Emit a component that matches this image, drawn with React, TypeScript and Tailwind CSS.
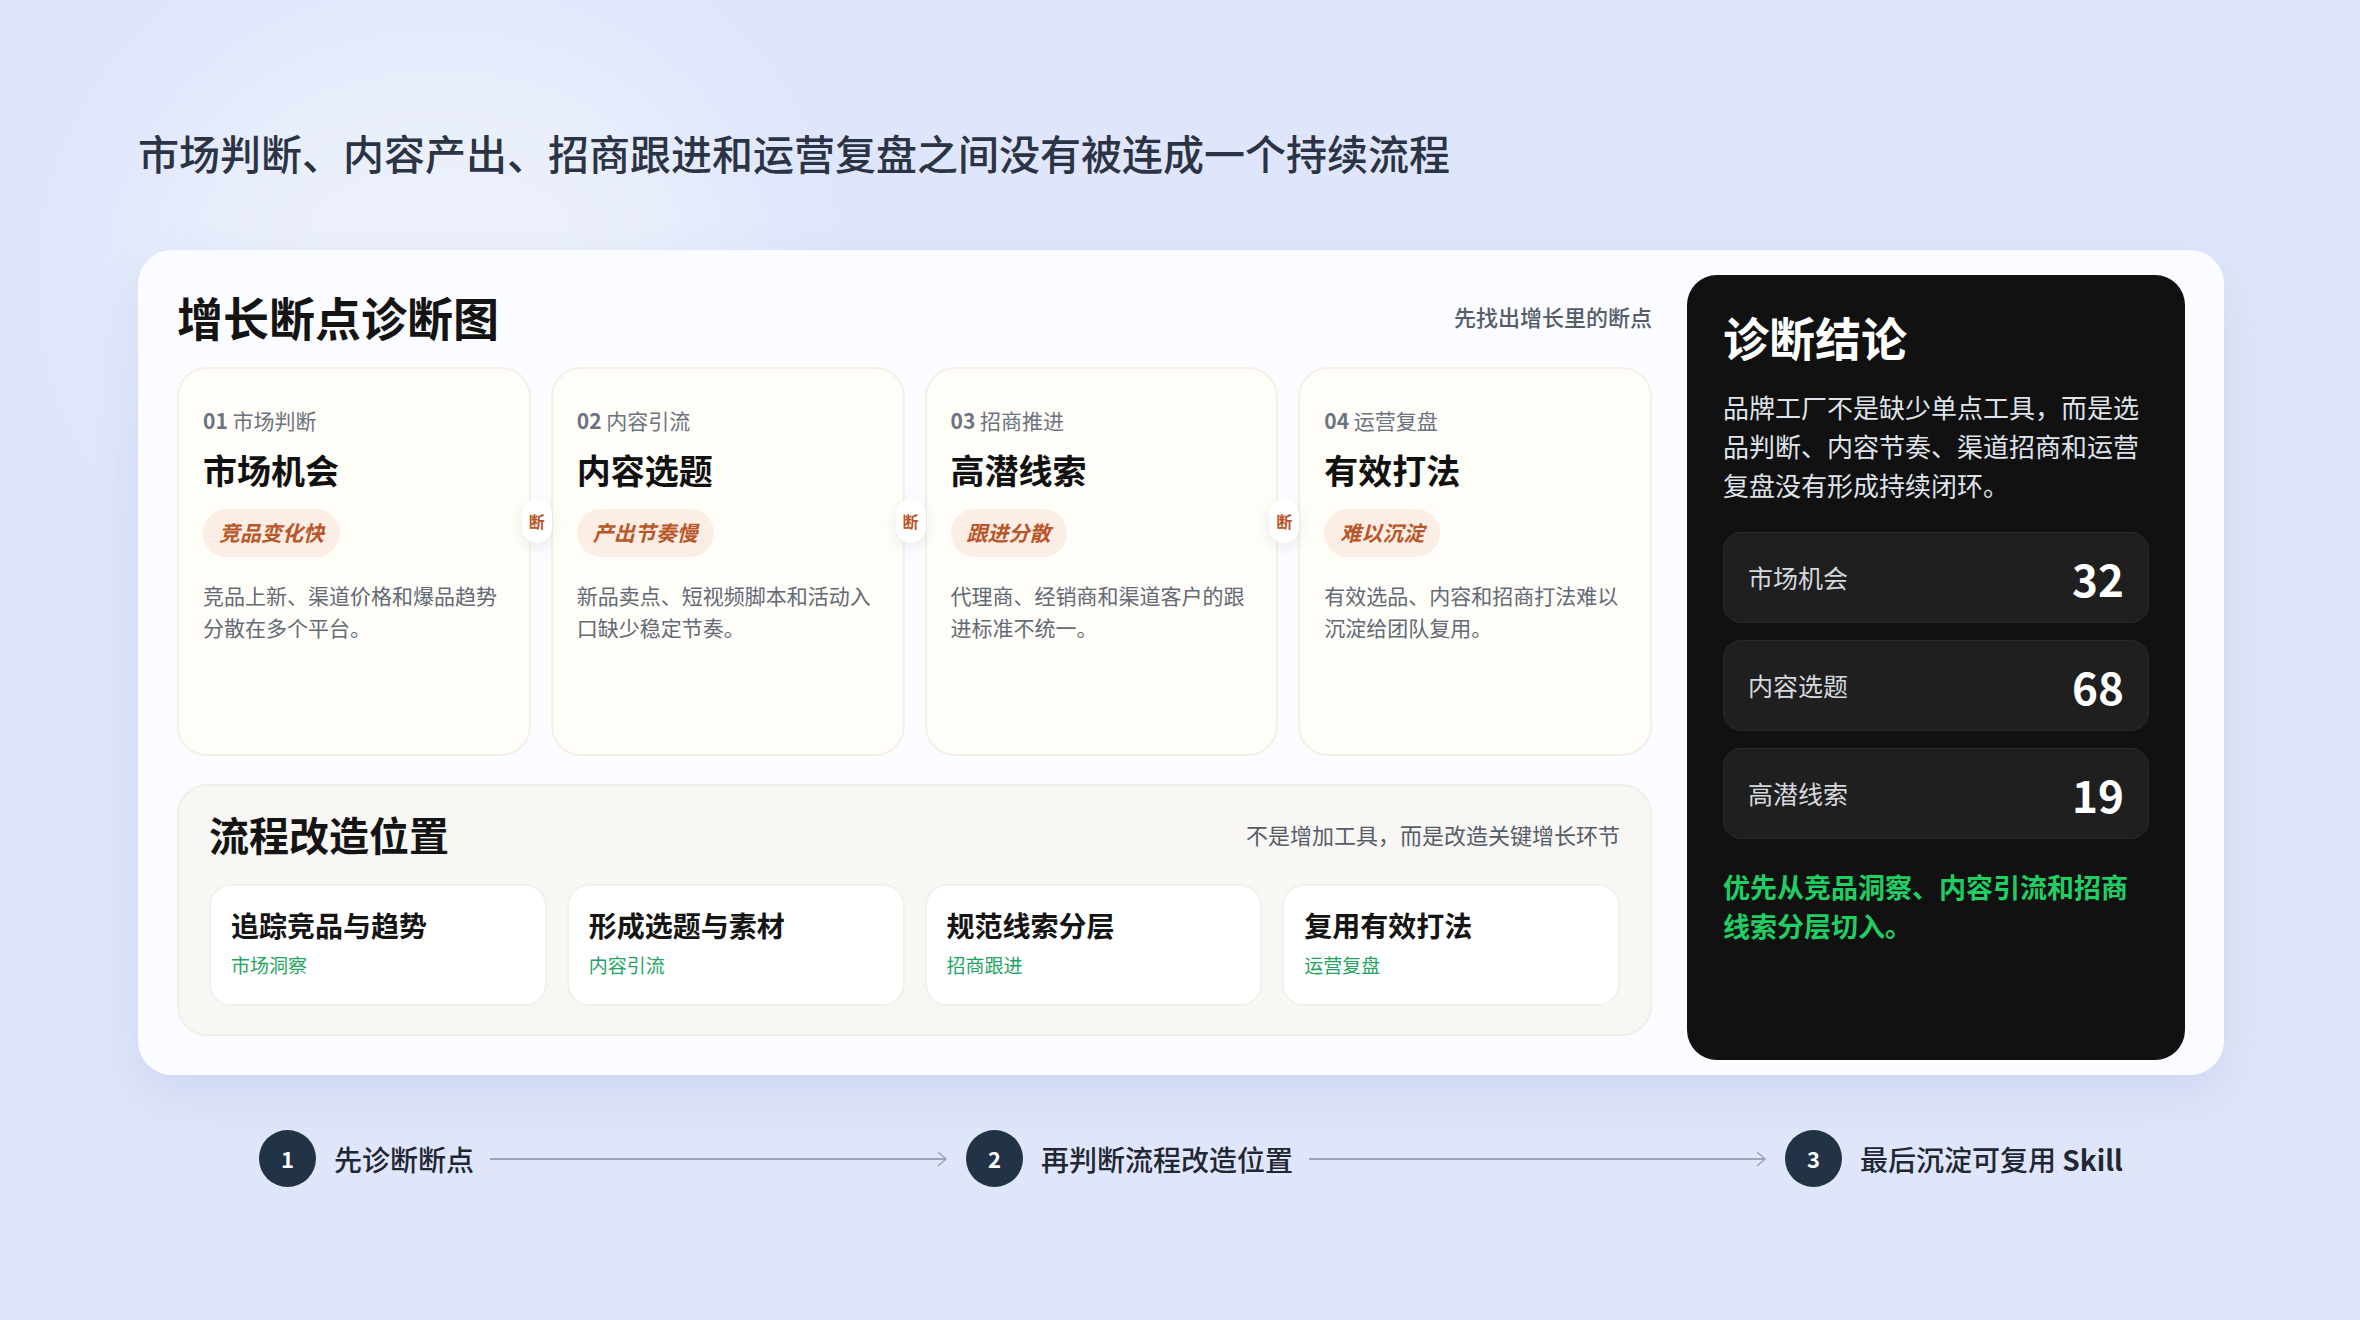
import React from 'react';

const font = { fontFamily: '"Noto Sans CJK SC", "Noto Sans", sans-serif' };

const stages = [
  { no: '01', cat: '市场判断', title: '市场机会', tag: '竞品变化快', desc: '竞品上新、渠道价格和爆品趋势分散在多个平台。' },
  { no: '02', cat: '内容引流', title: '内容选题', tag: '产出节奏慢', desc: '新品卖点、短视频脚本和活动入口缺少稳定节奏。' },
  { no: '03', cat: '招商推进', title: '高潜线索', tag: '跟进分散', desc: '代理商、经销商和渠道客户的跟进标准不统一。' },
  { no: '04', cat: '运营复盘', title: '有效打法', tag: '难以沉淀', desc: '有效选品、内容和招商打法难以沉淀给团队复用。' },
];

const fixes = [
  { title: '追踪竞品与趋势', tag: '市场洞察' },
  { title: '形成选题与素材', tag: '内容引流' },
  { title: '规范线索分层', tag: '招商跟进' },
  { title: '复用有效打法', tag: '运营复盘' },
];

const stats = [
  { label: '市场机会', value: '32' },
  { label: '内容选题', value: '68' },
  { label: '高潜线索', value: '19' },
];

function Arrow() {
  return (
    <svg width="460" height="20" viewBox="0 0 460 20" className="mx-4">
      <line x1="0" y1="10" x2="456" y2="10" stroke="#9aa5bb" strokeWidth="2" />
      <polyline points="448,3 456,10 448,17" fill="none" stroke="#9aa5bb" strokeWidth="1.5" />
    </svg>
  );
}

export default function App() {
  return (
    <div style={font} className="w-[2360px] h-[1320px] bg-[#dfe6fb] relative overflow-hidden">
      <div className="absolute left-[140px] top-[30px] w-[600px] h-[500px] rounded-full bg-white/40 blur-[80px]" />
      <div className="relative px-[138px] pt-[132px]">
        <h1 className="text-[41px] font-medium text-[#2b3444] leading-none">
          市场判断、内容产出、招商跟进和运营复盘之间没有被连成一个持续流程
        </h1>

        <div className="mt-[77px] w-[2086px] h-[825px] bg-[#fbfcff] rounded-[34px] shadow-[0_20px_50px_rgba(90,110,170,0.12)] flex px-[39px] pt-[37px] pb-[39px] gap-[35px]">
          <div className="w-[1475px] flex flex-col">
            <div className="flex items-end justify-between h-[52px]">
              <h2 className="text-[46px] font-bold text-[#141414] leading-none">增长断点诊断图</h2>
              <span className="text-[22px] font-medium text-[#555d69] mb-[6px]">先找出增长里的断点</span>
            </div>
            <div className="mt-[28px] flex gap-[20px] h-[389px]">
              {stages.map((s, i) => (
                <div key={s.no} className="relative flex-1 bg-[#fffdf8] border-2 border-[#f5f0e6] rounded-[30px] px-[24px] pt-[36px]">
                  <div className="text-[21px] text-[#6b7380]"><span className="font-bold">{s.no}</span> {s.cat}</div>
                  <div className="mt-[12px] text-[34px] font-bold text-[#111] leading-tight">{s.title}</div>
                  <div className="mt-[18px] inline-block px-[16px] py-[8px] rounded-full bg-[#fdeee5] text-[21px] font-bold italic text-[#b9572a]">{s.tag}</div>
                  <div className="mt-[22px] text-[21px] leading-[32px] text-[#626a75]">{s.desc}</div>
                  {i < 3 && (
                    <div className="absolute right-[-23px] top-[130px] z-10 w-[30px] h-[44px] rounded-full bg-white shadow-[0_4px_14px_rgba(0,0,0,0.08)] flex items-center justify-center text-[16px] font-bold text-[#b9572a]">断</div>
                  )}
                </div>
              ))}
            </div>
            <div className="mt-[28px] flex-1 bg-[#f8f7f4] border-2 border-[#f1efea] rounded-[30px] px-[30px] pt-[28px]">
              <div className="flex items-center justify-between">
                <h3 className="text-[40px] font-bold text-[#141414] leading-none">流程改造位置</h3>
                <span className="text-[22px] text-[#555d69]">不是增加工具，而是改造关键增长环节</span>
              </div>
              <div className="mt-[30px] flex gap-[20px]">
                {fixes.map((f) => (
                  <div key={f.title} className="flex-1 h-[122px] bg-white border-2 border-[#f2f0eb] rounded-[22px] px-[20px] pt-[22px]">
                    <div className="text-[28px] font-bold text-[#151515] leading-tight">{f.title}</div>
                    <div className="mt-[8px] text-[19px] text-[#1fa463]">{f.tag}</div>
                  </div>
                ))}
              </div>
            </div>
          </div>

          <div className="w-[498px] -mt-[12px] -mb-[24px] bg-[#111111] rounded-[30px] px-[36px] pt-[38px]">
            <h2 className="text-[46px] font-bold text-white leading-none">诊断结论</h2>
            <p className="mt-[28px] text-[26px] leading-[39px] text-[#dfe3ea]">
              品牌工厂不是缺少单点工具，而是选品判断、内容节奏、渠道招商和运营复盘没有形成持续闭环。
            </p>
            <div className="mt-[28px] flex flex-col gap-[17px]">
              {stats.map((s) => (
                <div key={s.label} className="h-[91px] rounded-[18px] bg-[#1f1f1f] border border-[#2a2a2a] flex items-center justify-between px-[24px]">
                  <span className="text-[25px] text-[#d5d8de]">{s.label}</span>
                  <span className="text-[44px] font-bold text-white">{s.value}</span>
                </div>
              ))}
            </div>
            <p className="mt-[28px] text-[27px] leading-[39px] font-bold text-[#1fcf63]">
              优先从竞品洞察、内容引流和招商线索分层切入。
            </p>
          </div>
        </div>

        <div className="mt-[55px] ml-[121px] flex items-center">
          <div className="w-[57px] h-[57px] rounded-full bg-[#223247] text-white text-[22px] font-bold flex items-center justify-center">1</div>
          <span className="ml-[18px] text-[28px] font-medium text-[#1f2733]">先诊断断点</span>
          <Arrow />
          <div className="w-[57px] h-[57px] rounded-full bg-[#223247] text-white text-[22px] font-bold flex items-center justify-center">2</div>
          <span className="ml-[18px] text-[28px] font-medium text-[#1f2733]">再判断流程改造位置</span>
          <Arrow />
          <div className="w-[57px] h-[57px] rounded-full bg-[#223247] text-white text-[22px] font-bold flex items-center justify-center">3</div>
          <span className="ml-[18px] text-[28px] font-medium text-[#1f2733]">最后沉淀可复用 <b>Skill</b></span>
        </div>
      </div>
    </div>
  );
}
